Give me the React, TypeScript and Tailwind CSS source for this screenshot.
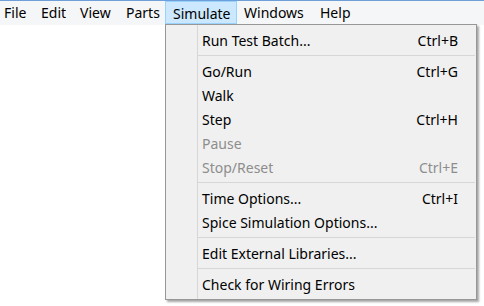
import React from 'react'

type Entry =
  | { kind: 'item'; label: string; shortcut?: string; disabled?: boolean }
  | { kind: 'sep' }

const menus = [
  { label: 'File', w: 'w-[34px] pl-[4px]' },
  { label: 'Edit', w: 'w-[39px] pl-[7px]' },
  { label: 'View', w: 'w-[46px] pl-[7px]' },
  { label: 'Parts', w: 'w-[46px] pl-[7px]' },
  { label: 'Simulate', w: 'w-[72px] pl-[7px]', open: true },
  { label: 'Windows', w: 'w-[76px] pl-[7px]' },
  { label: 'Help', w: 'w-[44px] pl-[7px]' },
]

const entries: Entry[] = [
  { kind: 'item', label: 'Run Test Batch...', shortcut: 'Ctrl+B' },
  { kind: 'sep' },
  { kind: 'item', label: 'Go/Run', shortcut: 'Ctrl+G' },
  { kind: 'item', label: 'Walk' },
  { kind: 'item', label: 'Step', shortcut: 'Ctrl+H' },
  { kind: 'item', label: 'Pause', disabled: true },
  { kind: 'item', label: 'Stop/Reset', shortcut: 'Ctrl+E', disabled: true },
  { kind: 'sep' },
  { kind: 'item', label: 'Time Options...', shortcut: 'Ctrl+I' },
  { kind: 'item', label: 'Spice Simulation Options...' },
  { kind: 'sep' },
  { kind: 'item', label: 'Edit External Libraries...' },
  { kind: 'sep' },
  { kind: 'item', label: 'Check for Wiring Errors' },
]

export default function App() {
  return (
    <div className="relative w-[484px] h-[306px] bg-white overflow-hidden text-[14px] text-black" style={{ fontFamily: '"Noto Sans", "Open Sans", sans-serif' }}>
      {/* menubar */}
      <div className="flex h-[25px] border-t border-[#6f9fd8] bg-[#f5f6f7]">
        {menus.map(m => (
          <div
            key={m.label}
            className={`${m.w} h-[23px] leading-[23px] shrink-0 ${m.open ? 'bg-[#cce8ff] border border-[#99d1ff] pl-[6px] leading-[21px]' : ''}`}
          >
            {m.label}
          </div>
        ))}
      </div>

      {/* dropdown */}
      <div className="absolute left-[165px] top-[24px] w-[312px] flex border border-[#979797] bg-[#f0f0f0] shadow-[2px_2px_2px_rgba(0,0,0,0.35)]">
        <div className="w-[31px] shrink-0" />
        <div className="flex-1 border-l border-[#d7d7d7] py-[3px]">
          {entries.map((e, i) =>
            e.kind === 'sep' ? (
              <div key={i} className="h-[7px] pt-[3px]">
                <div className="h-px bg-[#d7d7d7] mr-[1px]" />
              </div>
            ) : (
              <div
                key={i}
                className={`flex justify-between h-6 leading-[25px] pl-[4px] pr-[18px] ${e.disabled ? 'text-[#8d8d8d]' : ''}`}
              >
                <span>{e.label}</span>
                {e.shortcut && <span>{e.shortcut}</span>}
              </div>
            ),
          )}
        </div>
      </div>
    </div>
  )
}
